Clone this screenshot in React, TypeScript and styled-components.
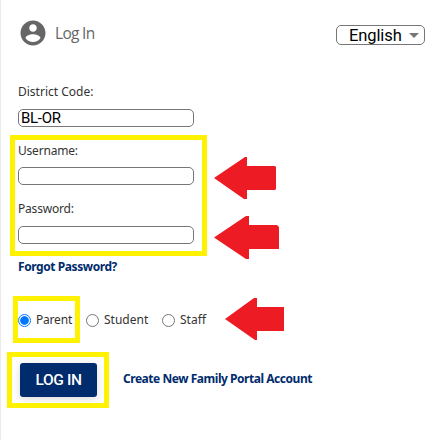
import React from "react";
import styled, { createGlobalStyle } from "styled-components";

const GlobalStyle = createGlobalStyle`
  * { box-sizing: border-box; }
  body { margin: 0; background: #fff; }
`;

const Page = styled.main`
  position: relative;
  width: 439px;
  height: 440px;
  overflow: hidden;
  padding: 17px 14px 0 17px;
  border-left: 1px solid #ebebeb;
  font-family: "Noto Sans", "Open Sans", sans-serif;
  font-size: 12px;
  color: #333;
`;

const Header = styled.header`
  display: flex;
  align-items: center;
  height: 31px;
  color: #666;
`;

const Avatar = styled.svg`
  flex: none;
  margin: 0 0 0 -0.5px;
`;

const Title = styled.h1`
  margin: 1px 0 0 7.5px;
  flex: 1;
  font-family: "Open Sans", sans-serif;
  font-size: 15.5px;
  font-weight: 400;
  line-height: 22px;
  letter-spacing: -0.7px;
`;

const LanguageSelect = styled.button`
  display: flex;
  align-items: center;
  justify-content: space-between;
  width: 89px;
  height: 20px;
  margin-top: 5px;
  padding: 1px 5px 0 12px;
  border: 1px solid #767676;
  border-radius: 5px;
  background: #fff;
  color: #000;
  font: 16.5px/19px Roboto, sans-serif;
  letter-spacing: -0.1px;
`;

const Form = styled.form`
  display: flex;
  flex-direction: column;
  align-items: flex-start;
  padding-top: 34px;
`;

const Field = styled.label<{ $height: number; $spacing: number; $drop?: number }>`
  display: flex;
  flex-direction: column;
  height: ${(p) => p.$height}px;
  & > span {
    height: 27px;
    padding-top: ${(p) => p.$drop ?? 0}px;
    line-height: 20px;
    letter-spacing: ${(p) => p.$spacing}px;
  }
`;

const TextInput = styled.input`
  width: 176px;
  height: 18px;
  padding: 0 2px;
  border: 1px solid #767676;
  border-radius: 5px;
  outline: none;
  background: #fff;
  color: #000;
  font: 15px/16px Roboto, sans-serif;
  letter-spacing: -0.3px;
`;

const Link = styled.a<{ $spacing: number }>`
  color: #002b6d;
  font-weight: 700;
  line-height: 20px;
  white-space: nowrap;
  letter-spacing: ${(p) => p.$spacing}px;
`;

const Roles = styled.div`
  display: grid;
  grid-template-columns: 68px 76px 60px;
  margin-top: 33px;
`;

const Role = styled.label<{ $spacing?: number }>`
  display: flex;
  align-items: center;
  gap: 5px;
  height: 20px;
  letter-spacing: ${(p) => p.$spacing ?? 0}px;
  & > span {
    margin-top: -2px;
  }
`;

const Radio = styled.input`
  appearance: none;
  flex: none;
  width: 13px;
  height: 13px;
  margin: 0;
  border: 1px solid #767676;
  border-radius: 50%;
  background: #fff;
  &:checked {
    border-color: #0075ff;
    background: radial-gradient(circle, #0075ff 3.9px, #fff 4.7px);
  }
`;

const Actions = styled.div`
  display: flex;
  align-items: center;
  gap: 26px;
  margin: 33px 0 0 2px;
  & > a {
    margin-top: -2px;
  }
`;

const Submit = styled.button`
  width: 77px;
  height: 34px;
  padding: 0;
  border: 0;
  border-radius: 3px;
  background: #002b6d;
  color: #fff;
  font: 500 15.5px/34px Roboto, sans-serif;
  letter-spacing: -0.4px;
  box-shadow: 0 2px 8px rgba(0, 0, 0, 0.15);
`;

const Highlight = styled.div<{ $x: number; $y: number; $w: number; $h: number }>`
  position: absolute;
  left: ${(p) => p.$x - 1}px;
  top: ${(p) => p.$y}px;
  width: ${(p) => p.$w}px;
  height: ${(p) => p.$h}px;
  border: 5px solid #fff200;
  pointer-events: none;
`;

const Arrows = styled.svg`
  position: absolute;
  left: -1px;
  top: 0;
  pointer-events: none;
`;

export default function App() {
  return (
    <>
      <GlobalStyle />
      <Page>
        <Header>
          <Avatar width="30" height="30" viewBox="0 0 24 24" fill="currentColor">
            <path d="M12 2C6.48 2 2 6.48 2 12s4.48 10 10 10 10-4.48 10-10S17.52 2 12 2zm0 3c1.66 0 3 1.34 3 3s-1.34 3-3 3-3-1.34-3-3 1.34-3 3-3zm0 14.2c-2.5 0-4.71-1.28-6-3.22.03-1.99 4-3.08 6-3.08 1.99 0 5.97 1.09 6 3.08-1.29 1.94-3.5 3.22-6 3.22z" />
          </Avatar>
          <Title>Log In</Title>
          <LanguageSelect type="button">
            English
            <svg width="10" height="5" viewBox="0 0 10 5">
              <path d="M0 0h10L5 5z" fill="#777" />
            </svg>
          </LanguageSelect>
        </Header>
        <Form>
          <Field $height={58} $spacing={0}>
            <span>District Code:</span>
            <TextInput defaultValue="BL-OR" />
          </Field>
          <Field $height={59} $spacing={-0.2} $drop={1}>
            <span>Username:</span>
            <TextInput />
          </Field>
          <Field $height={58} $spacing={-0.2}>
            <span>Password:</span>
            <TextInput type="password" />
          </Field>
          <Link $spacing={-0.42}>Forgot Password?</Link>
          <Roles>
            <Role $spacing={-0.2}>
              <Radio type="radio" name="role" defaultChecked />
              <span>Parent</span>
            </Role>
            <Role>
              <Radio type="radio" name="role" />
              <span>Student</span>
            </Role>
            <Role>
              <Radio type="radio" name="role" />
              <span>Staff</span>
            </Role>
          </Roles>
          <Actions>
            <Submit type="button">LOG IN</Submit>
            <Link $spacing={-0.46}>Create New Family Portal Account</Link>
          </Actions>
        </Form>
        <Highlight $x={10} $y={135} $w={197} $h={121} />
        <Highlight $x={13} $y={296} $w={67} $h={47} />
        <Highlight $x={7} $y={352} $w={102} $h={56} />
        <Arrows width="439" height="440" fill="#ed1c24">
          <path d="M214 178L245 157h2v9h28l1 1v22l-1 1h-28v9h-3z" />
          <path d="M214 237.5L246 216h3v9h28l2 2v22h-30v10h-3z" />
          <path d="M225 319L254 298h3v9h27v24h-27v9h-2z" />
        </Arrows>
      </Page>
    </>
  );
}
